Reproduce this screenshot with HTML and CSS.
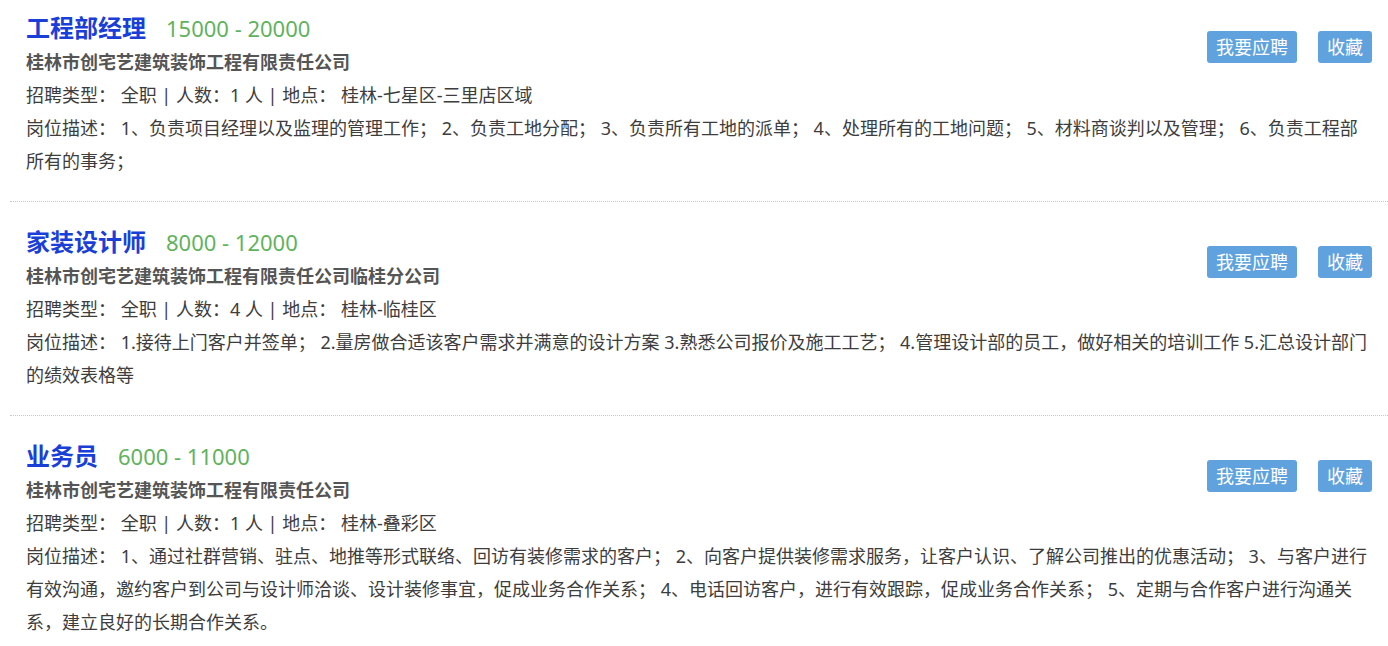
FILE: index.html
```html
<!DOCTYPE html>
<html>
<head>
	<title>招聘职位</title>
	<meta charset="utf-8">
	<link rel="stylesheet" href="styles.css">
</head>
<body>
  <div class="jobs">
  	<div class="job">
  		<div class="actions">
  			<a class="btn">我要应聘</a>
  			<a class="btn">收藏</a>
  		</div>
  		<div class="job-title">工程部经理<span class="salary">15000 - 20000</span></div>
  		<div class="company">桂林市创宅艺建筑装饰工程有限责任公司</div>
  		<div class="line">招聘类型： 全职 | 人数：1 人 | 地点： 桂林-七星区-三里店区域</div>
  		<div class="line">岗位描述： 1、负责项目经理以及监理的管理工作； 2、负责工地分配； 3、负责所有工地的派单； 4、处理所有的工地问题； 5、材料商谈判以及管理； 6、负责工程部所有的事务；</div>
  	</div>

  	<div class="job">
  		<div class="actions">
  			<a class="btn">我要应聘</a>
  			<a class="btn">收藏</a>
  		</div>
  		<div class="job-title">家装设计师<span class="salary">8000 - 12000</span></div>
  		<div class="company">桂林市创宅艺建筑装饰工程有限责任公司临桂分公司</div>
  		<div class="line">招聘类型： 全职 | 人数：4 人 | 地点： 桂林-临桂区</div>
  		<div class="line">岗位描述： 1.接待上门客户并签单； 2.量房做合适该客户需求并满意的设计方案 3.熟悉公司报价及施工工艺； 4.管理设计部的员工，做好相关的培训工作 5.汇总设计部门的绩效表格等</div>
  	</div>

  	<div class="job">
  		<div class="actions">
  			<a class="btn">我要应聘</a>
  			<a class="btn">收藏</a>
  		</div>
  		<div class="job-title">业务员<span class="salary">6000 - 11000</span></div>
  		<div class="company">桂林市创宅艺建筑装饰工程有限责任公司</div>
  		<div class="line">招聘类型： 全职 | 人数：1 人 | 地点： 桂林-叠彩区</div>
  		<div class="line">岗位描述： 1、通过社群营销、驻点、地推等形式联络、回访有装修需求的客户； 2、向客户提供装修需求服务，让客户认识、了解公司推出的优惠活动； 3、与客户进行有效沟通，邀约客户到公司与设计师洽谈、设计装修事宜，促成业务合作关系； 4、电话回访客户，进行有效跟踪，促成业务合作关系； 5、定期与合作客户进行沟通关系，建立良好的长期合作关系。</div>
  	</div>
  </div>
</body>
</html>
```

FILE: styles.css
```css
*{
	box-sizing: border-box;
}
body{
	margin: 0;
	background: white;
	font-family: "Noto Sans", "Noto Sans CJK SC", sans-serif;
	color: #444;
}
.jobs{
	margin: -13px 0 0 10px;
}
.job{
	padding: 23px 16px 23px 16px;
	border-bottom: 1px dotted #c8c8c8;
}
.job:first-child{
	padding-top: 24px;
}
.job:last-child{
	border-bottom: none;
}
.actions{
	float: right;
	display: flex;
	gap: 21px;
	margin-top: 21px;
	margin-left: 20px;
}
.btn{
	display: block;
	height: 32px;
	line-height: 32px;
	padding: 0 9px;
	background: #5fa2de;
	color: white;
	font-size: 18px;
	border-radius: 3px;
	cursor: pointer;
}
.job:first-child .actions{
	margin-top: 20px;
}
.job-title{
	font-size: 24px;
	font-weight: bold;
	color: #1a3fd8;
	line-height: 33px;
}
.salary{
	font-size: 22px;
	font-weight: normal;
	color: #5fb35c;
	margin-left: 20px;
}
.company{
	font-size: 18px;
	font-weight: bold;
	color: #555;
	line-height: 34px;
}
.line{
	font-size: 18px;
	line-height: 33px;
	color: #3d3d3d;
}
```
